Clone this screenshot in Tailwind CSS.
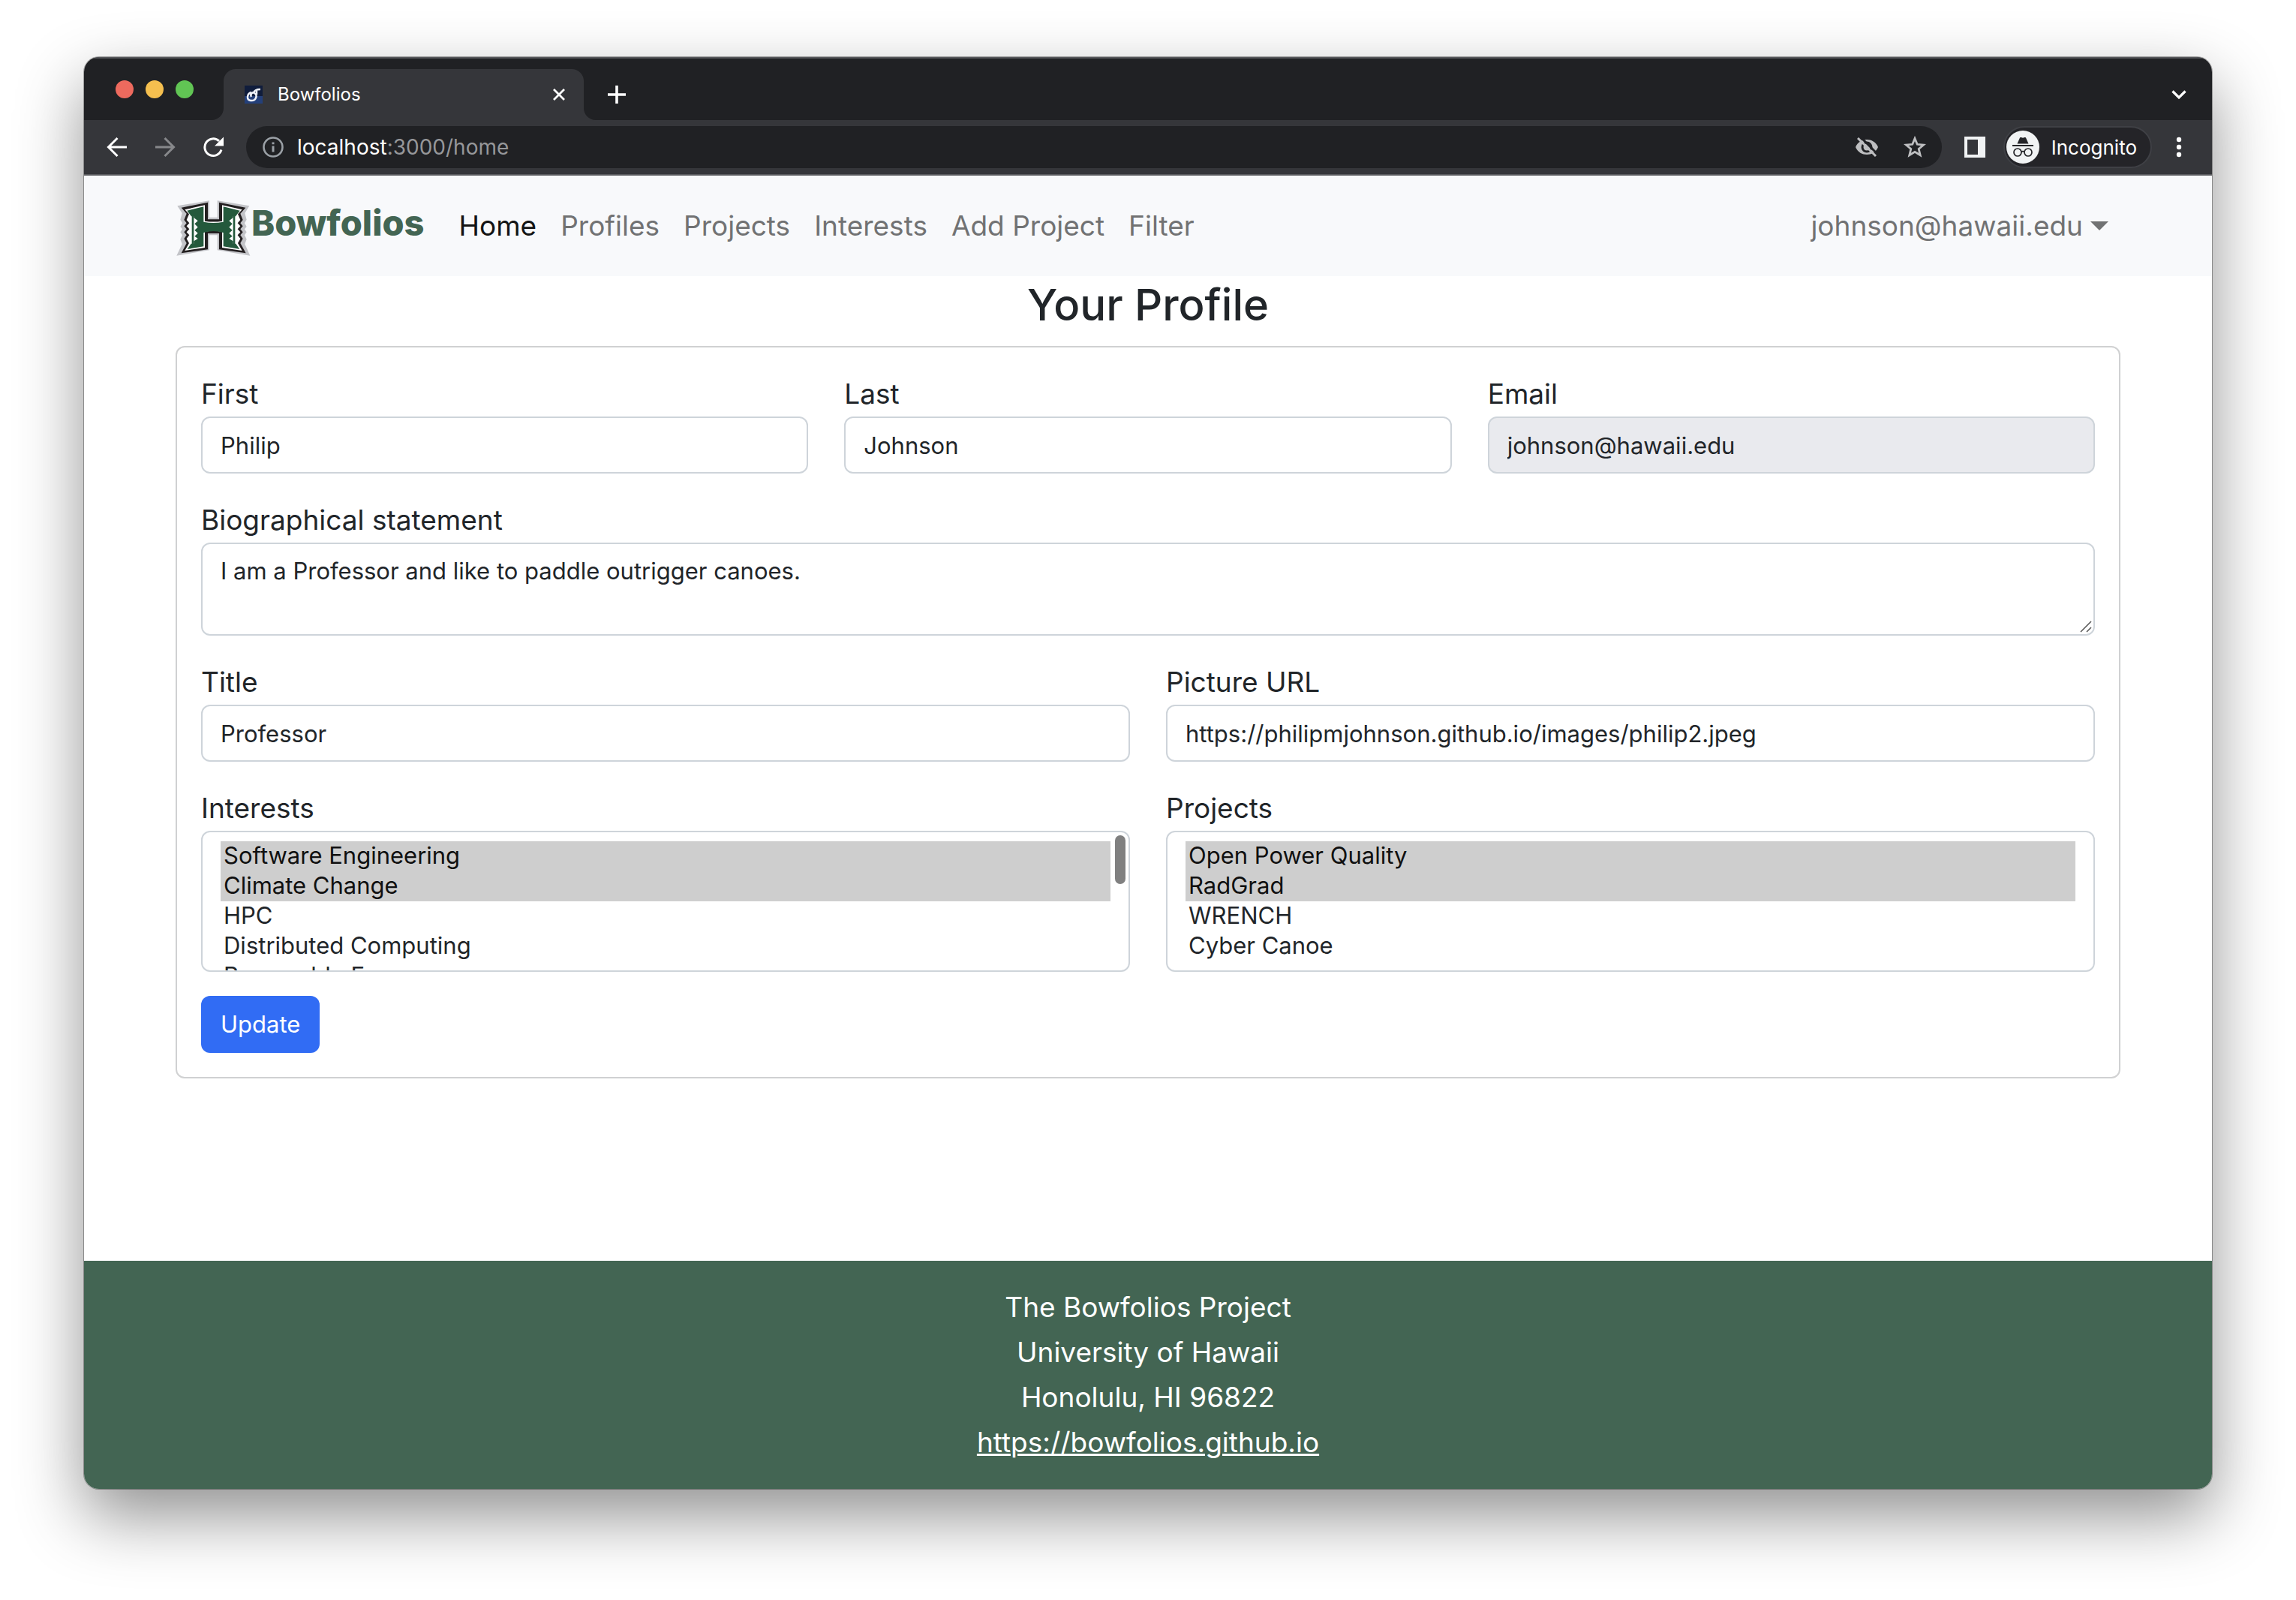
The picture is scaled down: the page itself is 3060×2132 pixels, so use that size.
<!DOCTYPE html>
<html lang="en">
<head>
<meta charset="utf-8">
<title>Bowfolios</title>
<script src="https://cdn.jsdelivr.net/npm/@tailwindcss/browser@4"></script>
</head>
<body class="flex min-h-screen flex-col bg-white px-28 pt-[76px] pb-[148px] font-['Inter',sans-serif] text-[#212529]">
<div class="flex flex-1 flex-col overflow-hidden rounded-[20px] bg-white shadow-[0_0_0_1px_rgba(0,0,0,0.3),0_36px_88px_rgba(0,0,0,0.44)]">

  <!-- Tab strip -->
  <div class="flex h-[84px] items-end border-t-2 border-[#55565a] bg-[#202124] text-white">
    <div class="flex h-[82px] items-center gap-4 pl-[42px]">
      <button aria-label="Close window" class="size-6 rounded-full bg-[#ed6a5e]"></button>
      <button aria-label="Minimize window" class="size-6 rounded-full bg-[#f5bf4f]"></button>
      <button aria-label="Zoom window" class="size-6 rounded-full bg-[#61c554]"></button>
    </div>
    <svg class="ml-6 size-4" viewBox="0 0 16 16"><path d="M16 0V16H0A16 16 0 0 0 16 0Z" fill="#35363a"/></svg>
    <div class="flex h-[68px] w-[480px] items-center rounded-t-2xl bg-[#35363a] pr-6 pl-7">
      <svg class="size-6" viewBox="0 0 24 24"><rect width="24" height="24" fill="#101d3c"/><rect y="14" width="24" height="10" fill="#24407a"/><path d="M9 9C3 11 2 19 8 20C15 21 18 13 13 10C10 8 7 12 9 15M12 10C13 6 17 5 21 5M16 5V12" fill="none" stroke="#eef1f8" stroke-width="2.500"/></svg>
      <span class="ml-5 flex-1 text-2xl">Bowfolios</span>
      <button aria-label="Close tab"><svg class="size-[18px]" viewBox="0 0 18 18"><path d="M2 2L16 16M16 2L2 16" stroke="#fff" stroke-width="2.8"/></svg></button>
    </div>
    <svg class="size-4" viewBox="0 0 16 16"><path d="M0 0V16H16A16 16 0 0 1 0 0Z" fill="#35363a"/></svg>
    <button aria-label="New tab" class="ml-4 flex h-[68px] items-center"><svg class="size-6" viewBox="0 0 24 24"><path d="M12 0V24M0 12H24" stroke="#fff" stroke-width="3.6"/></svg></button>
    <button aria-label="Search tabs" class="mr-8 ml-auto flex h-[68px] items-center"><svg class="size-6" viewBox="0 0 24 24"><path d="M3.500 7.500L12 16L20.500 7.500" fill="none" stroke="#fff" stroke-width="3.2"/></svg></button>
  </div>

  <!-- Toolbar -->
  <div class="flex h-[74px] items-center border-b-2 border-[#5a5b5f] bg-[#35363a] pr-10 pl-[30px]">
    <button aria-label="Back"><svg class="size-7" viewBox="0 0 28 28"><path d="M27 14H3M14.500 2L2.500 14L14.500 26" fill="none" stroke="#fff" stroke-width="3"/></svg></button>
    <button aria-label="Forward" class="ml-9"><svg class="size-7" viewBox="0 0 28 28"><path d="M1 14H25M13.500 2L25.500 14L13.500 26" fill="none" stroke="#87888b" stroke-width="3"/></svg></button>
    <button aria-label="Reload" class="ml-9"><svg class="size-7" viewBox="0 0 28 28"><path d="M25 17.500A11.300 11.300 0 1 1 22 6" fill="none" stroke="#fff" stroke-width="3"/><path d="M28 0.500V12.500H16Z" fill="#fff"/></svg></button>
    <div class="ml-[30px] flex h-14 flex-1 items-center rounded-full bg-[#202124] pr-[21px] pl-[22px]">
      <svg class="size-7" viewBox="0 0 28 28"><circle cx="14" cy="14" r="12.500" fill="none" stroke="#9aa0a6" stroke-width="2.600"/><path d="M14 12.500V20.500M14 7.500V10.300" stroke="#9aa0a6" stroke-width="3"/></svg>
      <a href="http://localhost:3000/home" class="ml-[18px] flex-1 text-[28px] text-[#96979a]"><span class="text-white">localhost</span>:3000/home</a>
      <svg class="h-[26px] w-[30px]" viewBox="0 0 30 26"><path d="M0 13C3 6 9 3 15 3S27 6 30 13C27 20 21 23 15 23S3 20 0 13Z" fill="#bdbec0"/><circle cx="15" cy="13" r="7.500" fill="#202124"/><circle cx="15" cy="13" r="4.500" fill="#bdbec0"/><path d="M6 -1L31 24" stroke="#202124" stroke-width="3"/><path d="M3 1L27 25" stroke="#bdbec0" stroke-width="3"/></svg>
      <button aria-label="Bookmark this tab" class="ml-[34px]"><svg class="size-[30px]" viewBox="0 0 30 30"><path d="M15 3.500L18.200 11.300L26.600 12L20.200 17.500L22.200 25.700L15 21.300L7.800 25.700L9.800 17.500L3.400 12L11.800 11.300Z" fill="none" stroke="#bdbec0" stroke-width="2.800"/></svg></button>
    </div>
    <button aria-label="Side panel" class="ml-[30px]"><svg class="size-7" viewBox="0 0 28 28"><path fill-rule="evenodd" d="M0 0H28V28H0ZM4 4V24H18V4Z" fill="#f1f3f4"/></svg></button>
    <button class="ml-6 flex h-14 items-center rounded-full border-2 border-[#3f4045] bg-[#242428] pr-[18px] pl-[2px] text-[26px] text-white">
      <svg class="size-11" viewBox="0 0 44 44"><circle cx="22" cy="22" r="22" fill="#f1f3f4"/><path d="M14.500 17.500L18 9.500Q18.500 8.600 19.500 9L22 9.700L24.500 9Q25.500 8.600 26 9.500L29.500 17.500Z" fill="#242428"/><path d="M8 20H36" stroke="#242428" stroke-width="2"/><g fill="none" stroke="#242428" stroke-width="1.700"><circle cx="15" cy="29" r="5"/><circle cx="29" cy="29" r="5"/><path d="M20 28.500Q22 26.800 24 28.500"/></g></svg>
      <span class="ml-4">Incognito</span>
    </button>
    <button aria-label="Menu" class="ml-8"><svg class="h-7 w-2" viewBox="0 0 8 28"><g fill="#fff"><circle cx="4" cy="4" r="3.200"/><circle cx="4" cy="14" r="3.200"/><circle cx="4" cy="24" r="3.200"/></g></svg></button>
  </div>

  <!-- Site navigation -->
  <nav class="bg-[#f8f9fb] px-6">
    <div class="mx-auto flex h-[134px] max-w-[2592px] items-center text-[37px] leading-[60px] text-[#717273]">
      <a href="#" class="flex items-start pt-1.5 text-[47px] font-extrabold text-[#436553]">
        <svg class="h-[74px] w-[101px]" viewBox="41 51 303 222">
          <path d="M48 73L176 52V119H208V52L336 73L318 102L325 128L317 142L325 156L317 166L325 178L317 190L325 206L318 226L339 272L208 250V190H176V250L45 272L67 226L60 206L68 190L60 178L68 166L60 156L68 142L60 128L67 102Z" fill="#c3c4c8"/>
          <path d="M64 80L170 59V127H215V59L321 80L300 104L310 129L300 142L310 154L300 166L310 178L300 190L310 204L300 222L322 262L215 247V183H170V247L64 262L85 222L75 204L85 190L75 178L85 166L75 154L85 142L75 129L85 104Z" fill="#231f20"/>
          <path d="M78 88L158 70V134Q192 139 227 134V70L307 88L290 106L300 129L289 142L300 154L289 166L300 178L289 190L300 204L290 222L307 252L227 240V176Q192 170 158 176V240L78 252L95 222L85 204L96 190L85 178L96 166L85 154L96 142L85 129L95 106Z" fill="#fff"/>
          <path d="M87 92L153 76V137Q192 145 232 137V76L298 92L281 115H271V120L255 133L268 145L255 158L268 170L255 182L268 194L255 204L271 214V224H282L297 246L232 235V180Q192 168 153 180V235L88 246L103 224H114V214L130 204L117 194L130 182L117 170L130 158L117 145L130 133L114 120V115H104Z" fill="#24593c"/>
          <path d="M106 112H114V228H106ZM271 112H279V228H271Z" fill="#24593c"/>
        </svg>
        Bowfolios
      </a>
      <div class="ml-[30px] flex flex-1 items-center">
        <a href="#" class="px-4 text-[#131414]">Home</a>
        <a href="#" class="px-4">Profiles</a>
        <a href="#" class="px-4">Projects</a>
        <a href="#" class="px-4">Interests</a>
        <a href="#" class="px-4">Add Project</a>
        <a href="#" class="px-4">Filter</a>
      </div>
      <button class="flex items-center gap-[10px] pr-4">johnson@hawaii.edu
        <svg class="h-3 w-6" viewBox="0 0 24 12"><path d="M0 0H24L12 12Z" fill="#717273"/></svg>
      </button>
    </div>
  </nav>

  <!-- Profile form -->
  <main class="flex-1 px-6 text-[31px]">
    <div class="mx-auto max-w-[2592px]">
      <h2 class="mb-4 text-center text-[58px] leading-[77px] font-medium">Your Profile</h2>
      <form class="rounded-xl border-2 border-[#d0d1d2] p-8">
        <div class="grid grid-cols-3 gap-12">
          <div class="flex flex-col">
            <label for="first" class="text-[37px] leading-[60px]">First</label>
            <input id="first" type="text" value="Philip" class="h-[76px] rounded-xl border-2 border-[#ced4da] px-6">
          </div>
          <div class="flex flex-col">
            <label for="last" class="text-[37px] leading-[60px]">Last</label>
            <input id="last" type="text" value="Johnson" class="h-[76px] rounded-xl border-2 border-[#ced4da] px-6">
          </div>
          <div class="flex flex-col">
            <label for="email" class="text-[37px] leading-[60px]">Email</label>
            <input id="email" type="text" value="johnson@hawaii.edu" readonly class="h-[76px] rounded-xl border-2 border-[#ced4da] bg-[#e9eaee] px-6">
          </div>
        </div>
        <div class="relative mt-8 flex flex-col">
          <label for="bio" class="text-[37px] leading-[60px]">Biographical statement</label>
          <textarea id="bio" class="h-[124px] resize-none rounded-xl border-2 border-[#ced4da] px-6 py-3 leading-[48px]">I am a Professor and like to paddle outrigger canoes.</textarea>
          <svg class="absolute right-1 bottom-1 size-4" viewBox="0 0 16 16"><path d="M1 15L15 1M9 15L15 9" stroke="#555" stroke-width="1.500"/></svg>
        </div>
        <div class="mt-8 grid grid-cols-2 gap-x-12 gap-y-8">
          <div class="flex flex-col">
            <label for="title" class="text-[37px] leading-[60px]">Title</label>
            <input id="title" type="text" value="Professor" class="h-[76px] rounded-xl border-2 border-[#ced4da] px-6">
          </div>
          <div class="flex flex-col">
            <label for="picture" class="text-[37px] leading-[60px]">Picture URL</label>
            <input id="picture" type="text" value="https://philipmjohnson.github.io/images/philip2.jpeg" class="h-[76px] rounded-xl border-2 border-[#ced4da] px-6">
          </div>
          <div class="relative flex flex-col">
            <label for="interests" class="text-[37px] leading-[60px]">Interests</label>
            <select id="interests" multiple class="h-[188px] rounded-xl border-2 border-[#ced4da] px-6 py-3 [scrollbar-width:none]">
              <option selected class="h-10 px-1 py-0 leading-10">Software Engineering</option>
              <option selected class="h-10 px-1 py-0 leading-10">Climate Change</option>
              <option class="h-10 px-1 py-0 leading-10">HPC</option>
              <option class="h-10 px-1 py-0 leading-10">Distributed Computing</option>
              <option class="h-10 px-1 py-0 leading-10">Renewable Energy</option>
            </select>
            <div class="absolute top-[66px] right-1.5 h-[65px] w-3.5 rounded-full bg-[#808080]"></div>
          </div>
          <div class="flex flex-col">
            <label for="projects" class="text-[37px] leading-[60px]">Projects</label>
            <select id="projects" multiple class="h-[188px] rounded-xl border-2 border-[#ced4da] px-6 py-3 [scrollbar-width:none]">
              <option selected class="h-10 px-1 py-0 leading-10">Open Power Quality</option>
              <option selected class="h-10 px-1 py-0 leading-10">RadGrad</option>
              <option class="h-10 px-1 py-0 leading-10">WRENCH</option>
              <option class="h-10 px-1 py-0 leading-10">Cyber Canoe</option>
            </select>
          </div>
        </div>
        <button type="button" class="mt-8 h-[76px] rounded-xl bg-[#316cf4] px-[26px] text-white">Update</button>
      </form>
    </div>
  </main>

  <footer class="bg-[#436553] py-8 text-center text-[37px] leading-[60px] text-white">
    <p>The Bowfolios Project</p>
    <p>University of Hawaii</p>
    <p>Honolulu, HI 96822</p>
    <p><a href="https://bowfolios.github.io" class="underline decoration-[3px]">https://bowfolios.github.io</a></p>
  </footer>
</div>
</body>
</html>
